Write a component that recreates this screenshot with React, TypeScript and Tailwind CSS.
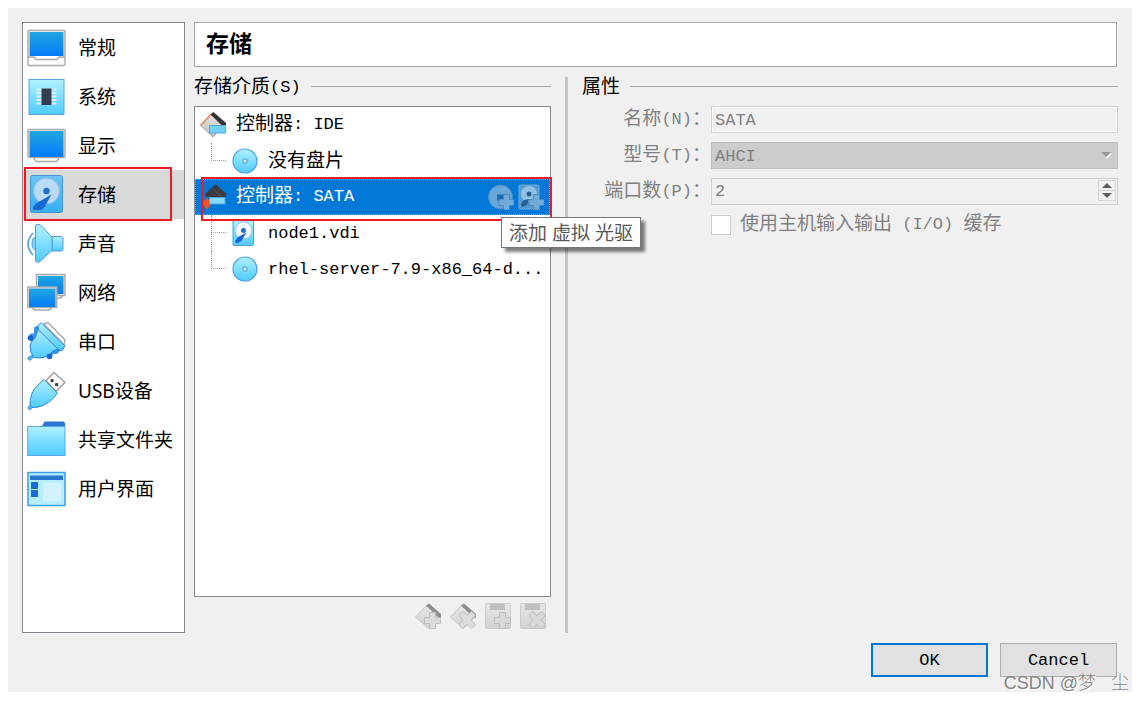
import React, { useState } from 'react';

// ============================================================================
// Types
// ============================================================================

interface SidebarItem {
  id: string;
  label: string;
  icon: React.ReactNode;
}

// ============================================================================
// Sidebar icons
// ============================================================================

const Gradients: React.FC = () => (
  <svg width="0" height="0" className="absolute" aria-hidden="true">
    <defs>
      <linearGradient id="screen" x1="0" y1="0" x2="0" y2="1">
        <stop offset="0" stopColor="#22a7e0" />
        <stop offset="1" stopColor="#007bfa" />
      </linearGradient>
      <linearGradient id="sky" x1="0" y1="0" x2="0" y2="1">
        <stop offset="0" stopColor="#b0f0ff" />
        <stop offset="1" stopColor="#4fcbff" />
      </linearGradient>
      <linearGradient id="disk" x1="0" y1="0" x2="0" y2="1">
        <stop offset="0" stopColor="#6cc4f2" />
        <stop offset="1" stopColor="#35b0f5" />
      </linearGradient>
      <linearGradient id="silver" x1="0" y1="0" x2="0" y2="1">
        <stop offset="0" stopColor="#e6e6e6" />
        <stop offset="1" stopColor="#bdbdbd" />
      </linearGradient>
      <linearGradient id="pale" x1="0" y1="0" x2="0" y2="1">
        <stop offset="0" stopColor="#e6e6e6" />
        <stop offset="1" stopColor="#d2d2d2" />
      </linearGradient>
    </defs>
  </svg>
);

const Icon: React.FC<{ children: React.ReactNode }> = ({ children }) => (
  <svg viewBox="0 0 40 40" className="size-10 shrink-0" aria-hidden="true">
    {children}
  </svg>
);

const GeneralIcon = () => (
  <Icon>
    <rect x="1" y="2.5" width="37" height="35" rx="1" fill="#fff" stroke="#a9a9a9" strokeWidth="1.4" />
    <path d="M1 29h6l2 2.5h21l2-2.5h6" fill="#fff" stroke="#a9a9a9" strokeWidth="1.400" />
    <rect x="2.5" y="4" width="34" height="24" fill="url(#screen)" />
  </Icon>
);

const SystemIcon = () => (
  <Icon>
    <rect x="2" y="2.5" width="35" height="35" fill="url(#sky)" stroke="#5aa2e0" />
    <path d="M9.500 12.500h20M9.500 16h20M9.500 19.500h20M9.500 23h20M9.500 26.500h20" stroke="#d9f4fc" strokeWidth="1.800" />
    <rect x="14.500" y="11.500" width="10" height="16.500" fill="#343d4c" />
  </Icon>
);

const DisplayIcon = () => (
  <Icon>
    <path d="M7.500 31v2.500l2 2h20l2-2V31" fill="#fff" stroke="#a9a9a9" strokeWidth="1.400" />
    <rect x="1" y="3.500" width="37" height="28" rx="1" fill="#eee" stroke="#a9a9a9" strokeWidth="1.400" />
    <rect x="2.500" y="5" width="34" height="26" fill="url(#screen)" />
  </Icon>
);

const StorageIcon = () => (
  <Icon>
    <rect x="3.500" y="0.500" width="32" height="37" rx="2" fill="url(#disk)" stroke="#4392da" />
    <circle cx="19.500" cy="16" r="13" fill="#b9dbf6" stroke="#8bbce8" />
    <path d="M24.500 19.500 17 33q-1.500 2-5 2H7q-2-1.500 0-4l2-2.500z" fill="#1567d3" />
    <circle cx="19.500" cy="16" r="3.200" fill="#1e70d2" />
  </Icon>
);

const SoundIcon = () => (
  <Icon>
    <path d="M9 13q-4 0-4 6.500T9 26z" fill="#84d4fa" stroke="#559ce0" />
    <path d="M25 12.500h9q2 0 2 2V25q0 2-2 2h-9z" fill="url(#sky)" stroke="#559ce0" />
    <path d="M8.500 2q0-1.500 1.500-1.500h3L25 13v13.500L12.500 38H10q-1.500 0-1.500-1.500z" fill="url(#sky)" stroke="#559ce0" />
    <path d="M6 9q-10 11 0 22" fill="none" stroke="#559ce0" strokeWidth="1.600" />
  </Icon>
);

const NetworkIcon = () => (
  <Icon>
    <path d="M28 22h7v2l-2 1h-5" fill="#fff" stroke="#a9a9a9" strokeWidth="1.400" />
    <rect x="9.500" y="1.500" width="28.500" height="21" fill="#eee" stroke="#a9a9a9" strokeWidth="1.400" />
    <rect x="11" y="3" width="25.500" height="18" fill="url(#screen)" />
    <path d="M6 34v2l2 1h14l2-1v-2" fill="#fff" stroke="#a9a9a9" strokeWidth="1.400" />
    <rect x="0.800" y="14" width="29" height="20.500" fill="#eee" stroke="#a9a9a9" strokeWidth="1.400" />
    <rect x="2" y="15.500" width="26.500" height="18.500" fill="url(#screen)" />
  </Icon>
);

const SerialIcon = () => (
  <Icon>
    <path d="M17 2l4-1.500L38 18l-1 5z" fill="#fff" stroke="#a9a9a9" strokeWidth="1.400" />
    <path d="M3 34 .700 36.500l2 2L8 34z" fill="#54bdf4" stroke="#3186da" />
    <path d="M1.500 14 4 11.500h3V5.500L12 3l1 5-6 11-4 0z" fill="#3a92e6" />
    <path d="M35 27l-5 5h-4l-2 5-4-3 6-9z" fill="#3a92e6" />
    <path d="M12 6l21 20-7 3-4 4q-4 3-10 3-5 0-6-2-3-3-3-10 0-4 5-8z" fill="url(#sky)" stroke="#3186da" />
    <path d="M11 3.500 14 .700 38 24l-3 4.500-3-.500L11.500 8z" fill="url(#sky)" stroke="#3186da" />
    <circle cx="3.500" cy="16" r="2.800" fill="#1567d3" />
    <circle cx="22.500" cy="34.500" r="2.800" fill="#1567d3" />
  </Icon>
);

const UsbIcon = () => (
  <Icon>
    <path d="M19 9.500 27 1.500l11 10-9 9z" fill="#fff" stroke="#9c9c9c" strokeWidth="1.300" />
    <rect x="23.500" y="8" width="3.200" height="3.200" rx="1" fill="#444" />
    <rect x="28" y="12" width="3.200" height="3.200" rx="1" fill="#444" />
    <path d="M4 33 .700 37l2 2L7 35z" fill="#54bdf4" stroke="#3186da" />
    <path d="M17 8.500 30.500 22l-4 5q-10 10-21 9.500Q3.500 36 3 33q0-12 8-19z" fill="url(#sky)" stroke="#3186da" />
  </Icon>
);

const FolderIcon = () => (
  <Icon>
    <path d="M14.500 7 17.500 1.500h19L38 3v4z" fill="#2b76d2" />
    <rect x="0.700" y="6.500" width="37.300" height="29" fill="url(#sky)" stroke="#5aa9e0" />
  </Icon>
);

const InterfaceIcon = () => (
  <Icon>
    <rect x="1" y="3.500" width="37" height="33" fill="#b5efff" stroke="#3f9fe2" strokeWidth="1.500" />
    <rect x="3" y="6.500" width="33" height="4.500" fill="#2b76d2" />
    <rect x="4" y="13" width="7" height="7" fill="#1f6cd4" />
    <rect x="4" y="21" width="7" height="7" fill="#1f6cd4" />
    <rect x="16" y="13.500" width="18" height="19" fill="#d3f2fc" />
  </Icon>
);

// ============================================================================
// Tree and toolbar icons
// ============================================================================

const SmallIcon: React.FC<{ children: React.ReactNode }> = ({ children }) => (
  <svg viewBox="0 0 26 26" className="size-[26px] shrink-0" aria-hidden="true">
    {children}
  </svg>
);

const IdeIcon = () => (
  <SmallIcon>
    <path d="M12 1 25.500 13 13 25 .500 13.500z" fill="url(#silver)" stroke="#9a9a9a" strokeWidth=".7" />
    <path d="M.500 13.500 12 1.500" stroke="#f0805c" strokeWidth="1.400" />
    <path d="M10.500 2.500 13.500 0 26 11v4h-2.500z" fill="#333" />
    <rect x="9.500" y="13.500" width="16" height="7.500" fill="#6fd0fa" stroke="#58a9e6" />
  </SmallIcon>
);

const SataIcon = () => (
  <SmallIcon>
    <path d="M5 10 14.500 1q1-.700 2 0L26 9.500V13H6z" fill="#3c3c40" />
    <path d="M12 4l9 8.500" stroke="#55555a" />
    <path d="M7 13.500l5 5.500-5 7-5-7z" fill="#e4572e" />
    <rect x="9.500" y="13.500" width="15.500" height="6.500" fill="#86daf8" stroke="#4ea6dc" />
  </SmallIcon>
);

const DiscIcon = () => (
  <SmallIcon>
    <circle cx="13" cy="13" r="12" fill="url(#sky)" stroke="#4ba3e6" strokeWidth="1.200" />
    <circle cx="13" cy="13" r="2.200" fill="#cfeffc" stroke="#6aaed4" strokeWidth="1.300" />
  </SmallIcon>
);

const HardDiskIcon = () => (
  <SmallIcon>
    <rect x="1" y="0.500" width="20.500" height="25" rx="1" fill="url(#sky)" stroke="#4ba3e6" />
    <circle cx="11.500" cy="10.500" r="8.500" fill="#f2fafe" stroke="#8fc3ec" />
    <path d="M14.500 12.500 9.500 21l-5 2.500-1.500-2.500 3-4z" fill="#1567d3" />
    <circle cx="11.500" cy="10.500" r="2.500" fill="#1e70d2" />
  </SmallIcon>
);

const AddDiscIcon = () => (
  <SmallIcon>
    <circle cx="12.500" cy="13" r="12" fill="#67a8d9" stroke="#4a8ec6" />
    <path d="M9 10.500h6.500V15H11v1.500H9z" fill="#1a6db5" />
    <path d="M15.500 10.500h6v5h4.500v6h-4.500V26h-6v-4.500H11v-6h4.500z" fill="#72abd6" stroke="#4386bf" strokeWidth=".8" />
  </SmallIcon>
);

const AddDiskIcon = () => (
  <SmallIcon>
    <rect x="1" y="1" width="20" height="24" rx="1" fill="#5399d2" stroke="#6aa9da" />
    <circle cx="11" cy="10" r="8" fill="#8fc0e6" />
    <path d="M11 15 9 21l-5 2-1-3 3-4z" fill="#2a5f94" />
    <circle cx="11" cy="10" r="2.500" fill="#2a5f94" />
    <path d="M15.500 10.500h6v5H26v6h-4.500V26h-6v-4.500H11v-6h4.500z" fill="#72abd6" stroke="#4386bf" strokeWidth=".8" />
  </SmallIcon>
);

const PLUS = 'M14.500 9.500h6v5h5v6h-5v5h-6v-5h-5v-6h5z';
const CROSS = 'M9 12l3.500-3.500L17 12.500l4.500-4L25.500 12l-4 5 4 5-4 3.500-4.500-4-4.500 4L9 22l3.500-5z';

const ControllerActionIcon: React.FC<{ mark: string }> = ({ mark }) => (
  <SmallIcon>
    <path d="M12 2 25 14 13.500 25.500 .500 14z" fill="url(#pale)" stroke="#c4c4c4" />
    <path d="M11 2.500 14 .500 26 11v3.500h-2.500z" fill="#8e8e8e" />
    <path d={mark} fill="#dcdcdc" stroke="#bdbdbd" />
  </SmallIcon>
);

const AttachmentActionIcon: React.FC<{ mark: string }> = ({ mark }) => (
  <SmallIcon>
    <rect x="0.500" y="0.500" width="25" height="25" rx="1.500" fill="url(#pale)" stroke="#cccccc" />
    <rect x="5" y="1" width="15" height="6" fill="#c0c0c0" />
    <path d={mark} fill="#d8d8d8" stroke="#bdbdbd" />
  </SmallIcon>
);

// ============================================================================
// Building blocks
// ============================================================================

const SIDEBAR_ITEMS: SidebarItem[] = [
  { id: 'general', label: '常规', icon: <GeneralIcon /> },
  { id: 'system', label: '系统', icon: <SystemIcon /> },
  { id: 'display', label: '显示', icon: <DisplayIcon /> },
  { id: 'storage', label: '存储', icon: <StorageIcon /> },
  { id: 'audio', label: '声音', icon: <SoundIcon /> },
  { id: 'network', label: '网络', icon: <NetworkIcon /> },
  { id: 'serial', label: '串口', icon: <SerialIcon /> },
  { id: 'usb', label: 'USB设备', icon: <UsbIcon /> },
  { id: 'shared', label: '共享文件夹', icon: <FolderIcon /> },
  { id: 'interface', label: '用户界面', icon: <InterfaceIcon /> },
];

// Chinese text runs slightly larger than the monospaced Latin around it
const Cn: React.FC<{ children: React.ReactNode }> = ({ children }) => (
  <span className="align-[-1px] text-[19px] leading-none">{children}</span>
);

const GroupTitle: React.FC<{ children: React.ReactNode }> = ({ children }) => (
  <div className="mb-2 flex h-6 items-center gap-[10px]">
    <h2 className="whitespace-nowrap pt-1">{children}</h2>
    <div className="h-px flex-1 bg-[#a5a5a5]" />
  </div>
);

const Branch: React.FC<{ last?: boolean }> = ({ last }) => (
  <span className="flex h-full w-[15px] shrink-0 flex-col">
    <span className="h-1/2 border-b border-l border-dotted border-[#9a9a9a]" />
    <span className={last ? 'h-1/2' : 'h-1/2 border-l border-dotted border-[#9a9a9a]'} />
  </span>
);

const ChildRow: React.FC<{ icon: React.ReactNode; last?: boolean; children: React.ReactNode }> = ({
  icon,
  last,
  children,
}) => (
  <li role="treeitem" className="flex h-9 items-center pl-4">
    <Branch last={last} />
    <span className="ml-[6px] mr-[10px]">{icon}</span>
    <span className="whitespace-nowrap pt-px">{children}</span>
  </li>
);

// ============================================================================
// Component
// ============================================================================

const App: React.FC = () => {
  const [selected, setSelected] = useState('storage');

  return (
    <div className="relative flex min-h-screen flex-col bg-white px-2 pt-2 pb-[10px] pr-3 font-['Liberation_Mono','Noto_Sans_CJK_SC',monospace] text-[17px] leading-6 text-black">
      <Gradients />
      <div className="flex flex-1 flex-col bg-[#f0f0f0] px-[14px] pt-[14px] pb-[15px]">
        <div className="flex flex-1 gap-[9px]">
          {/* Sidebar */}
          <nav className="w-[163px] shrink-0 border border-[#828790] bg-white font-['Noto_Sans','Noto_Sans_CJK_SC',sans-serif] text-[19px]">
            {SIDEBAR_ITEMS.map((item) => (
              <button
                key={item.id}
                type="button"
                onClick={() => setSelected(item.id)}
                className={
                  item.id === selected
                    ? 'relative flex h-[49px] w-full items-center gap-[11px] bg-[#d9d9d9] pl-1'
                    : 'flex h-[49px] w-full items-center gap-[11px] pl-1'
                }
              >
                {item.icon}
                <span className="whitespace-nowrap">{item.label}</span>
                {item.id === selected && (
                  <span className="absolute -top-[3px] -bottom-[2px] left-px right-3 border-2 border-[#ed1c24]" />
                )}
              </button>
            ))}
          </nav>

          <main className="flex min-w-0 flex-1 flex-col">
            <h1 className="mr-px flex h-[45px] shrink-0 items-center border border-[#a5a5a5] bg-white pl-[11px] pt-[2px] text-[23px] font-bold">
              存储
            </h1>

            <div className="mt-[7px] flex flex-1">
              {/* Storage tree */}
              <section className="flex w-[357px] shrink-0 flex-col">
                <GroupTitle>
                  <Cn>存储介质</Cn>(S)
                </GroupTitle>
                <ul role="tree" className="flex-1 border border-[#828790] bg-white">
                  <li role="treeitem" className="flex h-9 items-center gap-[10px] pl-[5px]">
                    <IdeIcon />
                    <span className="whitespace-nowrap">
                      <Cn>控制器</Cn>: IDE
                    </span>
                  </li>
                  <ChildRow icon={<DiscIcon />} last>
                    <Cn>没有盘片</Cn>
                  </ChildRow>
                  <li
                    role="treeitem"
                    aria-selected="true"
                    className="relative flex h-9 items-center gap-[10px] border border-dotted border-[#e58a3c] bg-[#0078d7] pl-1 pr-[5px] text-white"
                  >
                    <SataIcon />
                    <span className="flex-1 whitespace-nowrap">
                      <Cn>控制器</Cn>: SATA
                    </span>
                    <span className="flex gap-1">
                      <button type="button" aria-label="添加虚拟光驱">
                        <AddDiscIcon />
                      </button>
                      <button type="button" aria-label="添加虚拟硬盘">
                        <AddDiskIcon />
                      </button>
                    </span>
                    <span className="absolute -top-[3px] -bottom-[7px] left-[5px] -right-[3px] border-2 border-[#ed1c24]" />
                    <span
                      role="tooltip"
                      className="absolute top-[37px] left-[305px] z-10 flex h-[31px] items-center whitespace-nowrap border border-[#767676] bg-white px-[7px] font-['Noto_Sans','Noto_Sans_CJK_SC',sans-serif] text-[19px] text-[#575757] shadow-[4px_4px_3px_rgba(0,0,0,0.5)]"
                    >
                      添加 虚拟 光驱
                    </span>
                  </li>
                  <ChildRow icon={<HardDiskIcon />}>node1.vdi</ChildRow>
                  <ChildRow icon={<DiscIcon />} last>
                    rhel-server-7.9-x86_64-d...
                  </ChildRow>
                </ul>
                <div className="flex justify-end gap-[9px] pt-[6px] pr-[5px] pb-1">
                  <button type="button" disabled aria-label="添加控制器">
                    <ControllerActionIcon mark={PLUS} />
                  </button>
                  <button type="button" disabled aria-label="删除控制器">
                    <ControllerActionIcon mark={CROSS} />
                  </button>
                  <button type="button" disabled aria-label="添加附件">
                    <AttachmentActionIcon mark={PLUS} />
                  </button>
                  <button type="button" disabled aria-label="删除附件">
                    <AttachmentActionIcon mark={CROSS} />
                  </button>
                </div>
              </section>

              <div className="mx-[14px] mt-[3px] w-[3px] shrink-0 bg-[#c6c6c6]" />

              {/* Attributes */}
              <section className="min-w-0 flex-1">
                <GroupTitle>
                  <Cn>属性</Cn>
                </GroupTitle>
                <div className="grid grid-cols-[129px_1fr] items-center gap-y-[9px] text-[#808080]">
                  <label htmlFor="name" className="whitespace-nowrap text-right">
                    <Cn>名称</Cn>(N)<Cn>：</Cn>
                  </label>
                  <input
                    id="name"
                    disabled
                    defaultValue="SATA"
                    className="h-[27px] w-full border border-[#d0d0d0] bg-[#f0f0f0] px-[3px] pt-[2px] shadow-[inset_0_0_0_1px_#fff]"
                  />

                  <label htmlFor="type" className="whitespace-nowrap text-right">
                    <Cn>型号</Cn>(T)<Cn>：</Cn>
                  </label>
                  <div className="relative h-[27px]">
                    <select
                      id="type"
                      disabled
                      className="h-full w-full appearance-none border border-[#bfbfbf] bg-[#cccccc] px-[3px] pt-[2px] opacity-100"
                    >
                      <option>AHCI</option>
                    </select>
                    <svg viewBox="0 0 10 6" className="absolute top-[10px] right-[7px] h-[6px] w-[10px]" aria-hidden="true">
                      <path d="M5 6l5-5v1L6 6z" fill="#fff" stroke="#fff" />
                      <path d="M0 0h10L5 5z" fill="#999" />
                    </svg>
                  </div>

                  <label htmlFor="ports" className="whitespace-nowrap text-right">
                    <Cn>端口数</Cn>(P)<Cn>：</Cn>
                  </label>
                  <div className="flex h-[27px] border border-[#d0d0d0] bg-[#f0f0f0] p-px pb-[3px]">
                    <input
                      id="ports"
                      type="number"
                      disabled
                      defaultValue={2}
                      className="min-w-0 flex-1 px-[2px] pt-[2px] [appearance:textfield] [&::-webkit-inner-spin-button]:appearance-none"
                    />
                    <div className="flex w-[18px] flex-col border border-[#d4d4d4]">
                      <button type="button" disabled aria-label="增加" className="flex flex-1 items-center justify-center border-b border-[#d4d4d4]">
                        <svg viewBox="0 0 10 5" className="h-[5px] w-[10px]">
                          <path d="M0 5h10L5 0z" fill="#606060" />
                        </svg>
                      </button>
                      <button type="button" disabled aria-label="减少" className="flex flex-1 items-center justify-center">
                        <svg viewBox="0 0 10 5" className="h-[5px] w-[10px]">
                          <path d="M0 0h10L5 5z" fill="#606060" />
                        </svg>
                      </button>
                    </div>
                  </div>

                  <label className="col-start-2 flex h-[22px] items-center gap-[9px] whitespace-nowrap">
                    <input
                      type="checkbox"
                      disabled
                      className="size-5 appearance-none border border-[#cccccc] bg-white"
                    />
                    <span>
                      <Cn>使用主机输入输出</Cn> (I/O) <Cn>缓存</Cn>
                    </span>
                  </label>
                </div>
              </section>
            </div>
          </main>
        </div>

        {/* Footer */}
        <div className="mt-[10px] mr-px flex justify-end gap-3">
          <button type="button" className="h-[34px] w-[117px] border-2 border-[#0078d7] bg-[#e1e1e1] pt-[2px]">
            OK
          </button>
          <button type="button" className="h-[34px] w-[117px] border border-[#adadad] bg-[#e1e1e1] pt-[2px]">
            Cancel
          </button>
        </div>
      </div>

      <span className="absolute right-[15px] bottom-[5px] whitespace-pre font-['Liberation_Sans','Noto_Sans_CJK_SC',sans-serif] text-lg font-light text-[#858585] [text-shadow:1px_1px_0_#fff]">
        CSDN @梦{'\u00a0\u00a0 '}尘
      </span>
    </div>
  );
};

export default App;
